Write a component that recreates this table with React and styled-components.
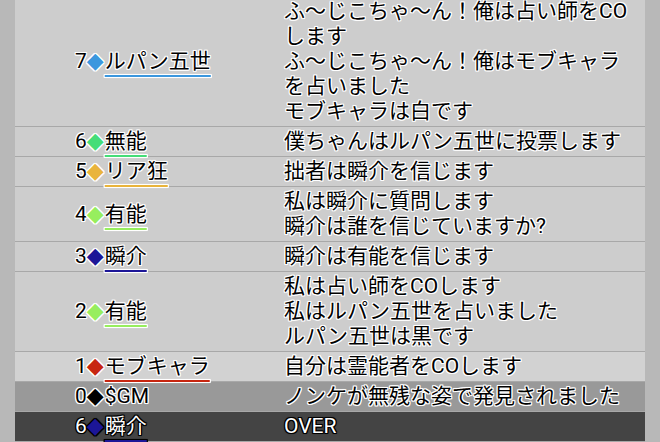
import styled, { createGlobalStyle } from 'styled-components';

const GlobalStyle = createGlobalStyle`
	html, body {
		margin: 0;
		padding: 0;
		background: #b8b8b8;
		overflow: hidden;
	}
`;

const whiteEdge =
	'1px 1px 0 #fff, -1px -1px 0 #fff, 1px -1px 0 #fff, -1px 1px 0 #fff, 0 1px 0 #fff, 0 -1px 0 #fff, 1px 0 0 #fff, -1px 0 0 #fff, 0 0 2px #fff';
const blackEdge =
	'1px 1px 0 #000, -1px -1px 0 #000, 1px -1px 0 #000, -1px 1px 0 #000, 0 1px 0 #000, 0 -1px 0 #000, 1px 0 0 #000, -1px 0 0 #000, 0 0 2px #000';

const Log = styled.div`
	margin: -3px 15px 0;
	font-family: Roboto, 'Noto Sans CJK JP', sans-serif;
	font-size: 21px;
	line-height: 25px;
`;

const Row = styled.div`
	display: flex;
	align-items: center;
	padding: 2px 0;
	background: ${({ $bg }) => $bg || '#cdcdcd'};
	border-bottom: 1px solid #a8a8a8;
	color: ${({ $dark }) => ($dark ? '#fff' : '#000')};
	text-shadow: ${({ $dark }) => ($dark ? blackEdge : whiteEdge)};
`;

const Speaker = styled.div`
	flex: 0 0 209px;
	padding-left: 60px;
	white-space: nowrap;
	height: 25px;
	overflow: visible;
`;

const Mark = styled.span`
	font-family: 'DejaVu Sans', sans-serif;
	font-size: 22px;
	line-height: 0;
	color: ${({ $color }) => $color};
	margin: 0 1px 0 0;
`;

const Name = styled.span`
	text-decoration: ${({ $color }) => ($color ? 'underline' : 'none')};
	text-decoration-color: ${({ $color }) => $color};
	text-decoration-thickness: 2px;
	text-underline-offset: 7px;
`;

const Message = styled.div`
	flex: 1;
	padding-right: 12px;
`;

const Line = styled.div`
	height: 25px;
	white-space: nowrap;
`;

const rows = [
	{
		no: 7,
		name: 'ルパン五世',
		color: '#3b97de',
		lines: ['ふ〜じこちゃ〜ん！俺は占い師をCO', 'します', 'ふ〜じこちゃ〜ん！俺はモブキャラ', 'を占いました', 'モブキャラは白です'],
	},
	{ no: 6, name: '無能', color: '#45dd78', lines: ['僕ちゃんはルパン五世に投票します'] },
	{ no: 5, name: 'リア狂', color: '#e9b43c', lines: ['拙者は瞬介を信じます'] },
	{ no: 4, name: '有能', color: '#97ee5e', lines: ['私は瞬介に質問します', '瞬介は誰を信じていますか?'] },
	{ no: 3, name: '瞬介', color: '#1c1697', lines: ['瞬介は有能を信じます'] },
	{
		no: 2,
		name: '有能',
		color: '#97ee5e',
		lines: ['私は占い師をCOします', '私はルパン五世を占いました', 'ルパン五世は黒です'],
	},
	{ no: 1, name: 'モブキャラ', color: '#c72610', lines: ['自分は霊能者をCOします'], bg: '#d2d2d2' },
	{ no: 0, name: '$GM', mark: '#000', lines: ['ノンケが無残な姿で発見されました'], bg: '#999999' },
	{ no: 6, name: '瞬介', color: '#1c1697', lines: ['OVER'], bg: '#444444', dark: true },
];

export default function App() {
	return (
		<>
			<GlobalStyle />
			<Log>
				{rows.map((row, i) => (
					<Row key={i} $bg={row.bg} $dark={row.dark}>
						<Speaker>
							{row.no}
							<Mark $color={row.mark || row.color}>◆</Mark>
							<Name $color={row.color}>{row.name}</Name>
						</Speaker>
						<Message>
							{row.lines.map((line, j) => (
								<Line key={j}>{line}</Line>
							))}
						</Message>
					</Row>
				))}
			</Log>
		</>
	);
}
